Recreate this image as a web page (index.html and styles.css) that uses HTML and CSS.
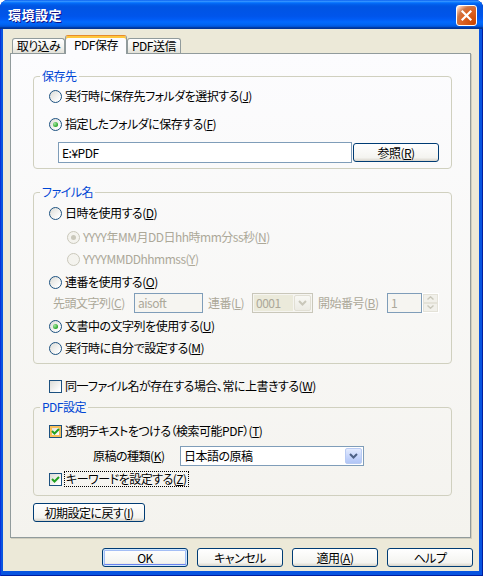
FILE: index.html
```html
<!DOCTYPE html>
<html lang="ja">
  <head>
    <meta charset="UTF-8" />
    <meta name="viewport" content="width=device-width, initial-scale=1.0" />
    <title>環境設定</title>
    <link rel="stylesheet" href="styles.css">
  </head>
  <body>
    <div class="window">
      <div class="titlebar">
        <span class="title">環境設定</span>
        <span class="close-btn">
          <svg width="13" height="13" viewBox="0 0 13 13"><path d="M2.5 2.5 L10.5 10.5 M10.5 2.5 L2.5 10.5" stroke="#fff" stroke-width="2.2" stroke-linecap="square" fill="none"/></svg>
        </span>
      </div>

      <div class="client">
        <div class="tabs">
          <div class="tab tab-import">取り込み</div>
          <div class="tab tab-save active">PDF保存</div>
          <div class="tab tab-send">PDF送信</div>
        </div>

        <div class="page">
          <!-- 保存先 -->
          <fieldset class="group group-dest">
            <legend>保存先</legend>
            <div class="row first"><span class="radio"></span>実行時に保存先フォルダを選択する(<u>J</u>)</div>
            <div class="row space-8"><span class="radio on"></span>指定したフォルダに保存する(<u>F</u>)</div>
            <div class="row path-row">
              <input class="edit path" type="text" value="E:¥PDF" />
              <button type="button" class="btn browse">参照(<u>R</u>)</button>
            </div>
          </fieldset>

          <!-- ファイル名 -->
          <fieldset class="group group-name">
            <legend>ファイル名</legend>
            <div class="row space-4"><span class="radio"></span>日時を使用する(<u>D</u>)</div>
            <div class="row sub space-4 disabled"><span class="radio dis on"></span>YYYY年MM月DD日hh時mm分ss秒(<u>N</u>)</div>
            <div class="row sub space-2 disabled"><span class="radio dis"></span>YYYYMMDDhhmmss(<u>Y</u>)</div>
            <div class="row space-3"><span class="radio"></span>連番を使用する(<u>O</u>)</div>
            <div class="row serial-row disabled">
              <span class="lbl lbl-prefix">先頭文字列(<u>C</u>)</span>
              <input class="edit prefix" type="text" value="aisoft" disabled />
              <span class="lbl lbl-serial">連番(<u>L</u>)</span>
              <span class="combo combo-serial dis">
                <span class="combo-text">0001</span>
                <span class="combo-btn">
                  <svg width="9" height="6" viewBox="0 0 9 6"><path d="M1 1 L4.5 4.5 L8 1" stroke="#C9C7BA" stroke-width="2" fill="none"/></svg>
                </span>
              </span>
              <span class="lbl lbl-start">開始番号(<u>B</u>)</span>
              <input class="edit start" type="text" value="1" disabled />
              <span class="spin">
                <span class="spin-part"><svg width="7" height="4" viewBox="0 0 7 4"><path d="M0.5 3.5 L3.5 0.8 L6.5 3.5" stroke="#C9C7BA" stroke-width="1.4" fill="none"/></svg></span>
                <span class="spin-part"><svg width="7" height="4" viewBox="0 0 7 4"><path d="M0.5 0.5 L3.5 3.2 L6.5 0.5" stroke="#C9C7BA" stroke-width="1.4" fill="none"/></svg></span>
              </span>
            </div>
            <div class="row space-3"><span class="radio on"></span>文書中の文字列を使用する(<u>U</u>)</div>
            <div class="row space-2"><span class="radio"></span>実行時に自分で設定する(<u>M</u>)</div>
          </fieldset>

          <div class="row overwrite-row"><span class="check"></span>同一ファイル名が存在する場合、常に上書きする(<u>W</u>)</div>

          <!-- PDF設定 -->
          <fieldset class="group group-pdf">
            <legend>PDF設定</legend>
            <div class="row space-7">
              <span class="check on hot">
                <svg width="11" height="11" viewBox="0 0 11 11"><path d="M2 5 L4.5 7.5 L9 3" stroke="#21A121" stroke-width="2" fill="none"/></svg>
              </span>透明テキストをつける（検索可能PDF）(<u>T</u>)
            </div>
            <div class="row kind-row space-5">
              <span class="lbl lbl-kind">原稿の種類(<u>K</u>)</span>
              <span class="combo combo-kind">
                <span class="combo-text">日本語の原稿</span>
                <span class="combo-btn">
                  <svg width="9" height="6" viewBox="0 0 9 6"><path d="M1 1 L4.5 4.5 L8 1" stroke="#4D6185" stroke-width="2" fill="none"/></svg>
                </span>
              </span>
            </div>
            <div class="row space-3">
              <span class="check on">
                <svg width="11" height="11" viewBox="0 0 11 11"><path d="M2 5 L4.5 7.5 L9 3" stroke="#21A121" stroke-width="2" fill="none"/></svg>
              </span><span class="focus">キーワードを設定する(<u>Z</u>)</span>
            </div>
          </fieldset>

          <button type="button" class="btn reset">初期設定に戻す(<u>I</u>)</button>
        </div>

        <div class="footer">
          <button type="button" class="btn default">OK</button>
          <button type="button" class="btn">キャンセル</button>
          <button type="button" class="btn">適用(<u>A</u>)</button>
          <button type="button" class="btn">ヘルプ</button>
        </div>
      </div>
    </div>
  </body>
</html>
```

FILE: styles.css
```css
* {
  box-sizing: border-box;
}

body {
  margin: 0;
  background: #fff;
  font-family: "Noto Sans CJK JP", "Noto Sans", sans-serif;
  font-size: 12px;
  line-height: 14px;
  letter-spacing: -0.5px;
  font-feature-settings: "palt";
  color: #000;
}

/* Window frame */
.window {
  width: 483px;
  height: 576px;
  display: flex;
  flex-direction: column;
  background: #0854E0;
  border-radius: 8px 8px 0 0;
  box-shadow: inset 1px 0 #0831D9, inset -1px 0 #001EA0, inset 0 -1px #001EA0;
}

.titlebar {
  height: 29px;
  flex-shrink: 0;
  display: flex;
  align-items: center;
  justify-content: space-between;
  padding: 0 6px 0 8px;
  border-radius: 8px 8px 0 0;
  background: linear-gradient(to bottom, #0058EE 0%, #3A93FF 4%, #288EFF 6%, #127DFF 8%, #036FFC 10%, #0262EE 14%, #0057E5 20%, #0054E3 24%, #0055EB 56%, #005BF5 66%, #026AFE 76%, #0062EF 86%, #0052D6 92%, #0040AB 94%, #003092 100%);
}

.title {
  color: #fff;
  font-weight: bold;
  font-size: 13px;
  letter-spacing: 0.5px;
  text-shadow: 1px 1px #0F1089;
}

.close-btn {
  width: 21px;
  height: 21px;
  margin-top: 2px;
  display: flex;
  align-items: center;
  justify-content: center;
  border: 1px solid #fff;
  border-radius: 3px;
  background: radial-gradient(circle at 90% 90%, #CC4600 0%, #DC6527 55%, #CD7546 70%, #FFCCB2 90%, #fff 100%);
}

.client {
  flex: 1;
  margin: 0 4px 5px 3px;
  padding: 6px 8px 4px 7px;
  display: flex;
  flex-direction: column;
  background: #ECE9D8;
}

/* Tabs */
.tabs {
  height: 18px;
  flex-shrink: 0;
  display: flex;
  align-items: flex-end;
  padding-left: 2px;
}

.tab {
  height: 15px;
  border: 1px solid #919B9C;
  border-bottom: none;
  border-radius: 3px 3px 0 0;
  background: linear-gradient(#FFFFFF, #F3F3EF 55%, #E2E1D8);
  text-align: center;
  line-height: 14px;
}

.tab.active {
  position: relative;
  z-index: 1;
  height: 19px;
  margin-bottom: -1px;
  border-top: 1px solid #E68B2C;
  background: #FCFCFE;
  box-shadow: inset 0 2px #FFC73C;
  padding-top: 2px;
}

.tab-import { width: 53px; }
.tab-save { width: 62px; }
.tab-send { width: 54px; }

/* Tab page */
.page {
  flex: 1;
  border: 1px solid #919B9C;
  background: linear-gradient(#FCFCFE, #F4F3EE);
  box-shadow: 1px 1px 0 #D0CEBF;
  padding: 15px 18px 0 22px;
}

.group {
  margin: 0;
  min-width: 0;
  border: 1px solid #D0D0BF;
  border-radius: 4px;
  padding: 0 12px 5px 15px;
}

.group legend {
  margin-left: -9px;
  padding: 0 2px;
  color: #0046D5;
  line-height: 14px;
}

.group-name {
  margin-top: 16px;
}

.group-pdf {
  margin-top: 4px;
  padding-bottom: 6px;
}

.row {
  display: flex;
  align-items: center;
  height: 20px;
  white-space: nowrap;
}

.row.first { margin-top: 3px; }
.space-2 { margin-top: 2px; }
.space-3 { margin-top: 3px; }
.space-4 { margin-top: 4px; }
.space-5 { margin-top: 5px; }
.space-7 { margin-top: 7px; }
.space-8 { margin-top: 8px; }

.row.sub {
  padding-left: 18px;
}

.disabled {
  color: #ACA899;
}

u {
  text-decoration-thickness: 1px;
  text-underline-offset: 1px;
}

/* Radio buttons */
.radio {
  width: 13px;
  height: 13px;
  flex-shrink: 0;
  margin-right: 3px;
  border: 1px solid #1C5180;
  border-radius: 50%;
  background: linear-gradient(135deg, #DCDCD7 0%, #FFFFFF 85%);
  display: flex;
  align-items: center;
  justify-content: center;
}

.radio.on::after {
  content: "";
  width: 5px;
  height: 5px;
  border-radius: 50%;
  background: radial-gradient(circle at 35% 35%, #A3E6A0, #21A121 75%);
}

.radio.dis {
  border-color: #CAC8BB;
  background: #F4F3EE;
}

.radio.dis.on::after {
  background: #CAC8BB;
}

/* Checkboxes */
.check {
  width: 13px;
  height: 13px;
  flex-shrink: 0;
  margin-right: 3px;
  border: 1px solid #1C5180;
  background: linear-gradient(135deg, #DCDCD7 0%, #FFFFFF 85%);
  display: flex;
  align-items: center;
  justify-content: center;
}

.check.hot {
  box-shadow: inset 0 0 0 2px #F9C05A;
}

.focus {
  outline: 1px dotted #000;
  padding: 0 1px;
}

.overwrite-row {
  margin-top: 12px;
  padding-left: 16px;
}

/* Edit boxes */
.edit {
  height: 21px;
  margin: 0;
  padding: 0 3px;
  border: 1px solid #7F9DB9;
  border-radius: 0;
  background: #fff;
  font: inherit;
  letter-spacing: inherit;
  color: #000;
  outline: none;
}

.edit:disabled {
  background: #F6F5F1;
  color: #ACA899;
}

.path-row {
  height: 21px;
  margin-top: 8px;
}

.path {
  width: 294px;
  margin-left: 9px;
}

.serial-row {
  height: 21px;
  padding-left: 4px;
}

.lbl {
  flex-shrink: 0;
}

.lbl-prefix { width: 81px; }
.prefix { width: 69px; height: 20px; }
.lbl-serial { width: 44px; margin-left: 5px; }
.lbl-start { width: 69px; margin-left: 5px; }
.start { width: 35px; height: 20px; }

/* Combo boxes */
.combo {
  height: 20px;
  display: flex;
  align-items: stretch;
  border: 1px solid #7F9DB9;
  background: #fff;
  padding: 1px;
}

.combo-text {
  flex: 1;
  padding-left: 2px;
  line-height: 16px;
}

.combo-btn {
  width: 17px;
  display: flex;
  align-items: center;
  justify-content: center;
  border: 1px solid #B9CBF3;
  border-radius: 2px;
  background: linear-gradient(#E3EBFE, #C3D3FB 60%, #B1C6F6);
}

.combo.dis {
  border-color: #C9C7BA;
  background: #F6F5F1;
}

.combo.dis .combo-text {
  background: #EBEADB;
  margin-right: 1px;
}

.combo.dis .combo-btn {
  border-color: #E1DFD4;
  background: linear-gradient(#F8F8F4, #ECEBE4);
}

.combo-serial { width: 61px; }

.kind-row .lbl-kind {
  width: 87px;
  margin-left: 44px;
  color: #000;
}

.combo-kind { width: 184px; }

/* Spinner */
.spin {
  width: 17px;
  height: 20px;
  display: flex;
  flex-direction: column;
  border: 1px solid #fff;
}

.spin-part {
  flex: 1;
  display: flex;
  align-items: center;
  justify-content: center;
  background: #F1F0EA;
  border: 1px solid #E4E2D8;
}

/* Push buttons */
.btn {
  height: 19px;
  margin: 0;
  padding: 0;
  border: 1px solid #003C74;
  border-radius: 3px;
  background: linear-gradient(#FFFFFF, #F4F4F0 80%, #D8D4CA);
  font: inherit;
  letter-spacing: inherit;
  color: #000;
  line-height: 14px;
}

.browse {
  width: 86px;
  margin-left: 1px;
}

.reset {
  width: 112px;
  margin-top: 7px;
}

.footer {
  height: 19px;
  flex-shrink: 0;
  margin-top: 10px;
  margin-right: -2px;
  display: flex;
  justify-content: flex-end;
  gap: 9px;
}

.footer .btn {
  width: 86px;
}

.btn.default {
  box-shadow: inset 0 0 0 1px #CEE7FF, inset 0 -2px #6982EE, inset 0 0 0 2px #A4BEF5;
}
```
